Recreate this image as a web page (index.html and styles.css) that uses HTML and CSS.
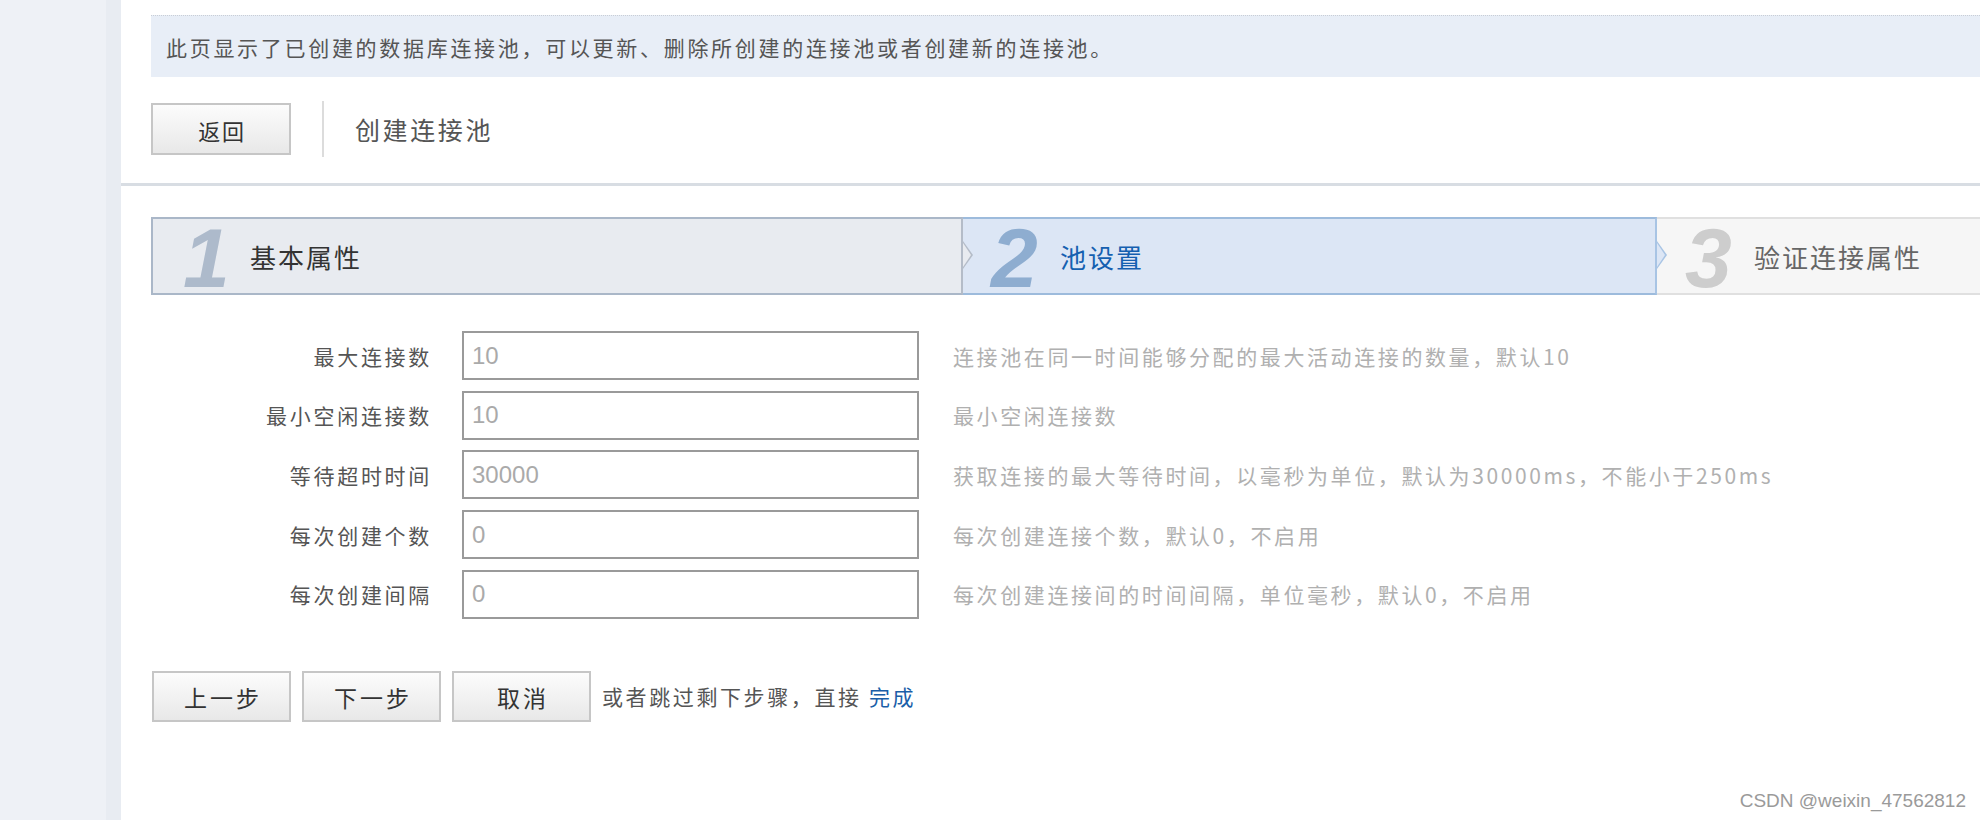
FILE: index.html
```html
<!DOCTYPE html>
<html lang="zh-CN">
<head>
<meta charset="utf-8">
<title>创建连接池</title>
<link rel="stylesheet" href="styles.css">
</head>
<body>
<div class="page">
  <aside class="sidebar"></aside>
  <main class="main">
    <div class="info">此页显示了已创建的数据库连接池，可以更新、删除所创建的连接池或者创建新的连接池。</div>
    <div class="toolbar">
      <button class="btn btn-back">返回</button>
      <span class="sep"></span>
      <span class="title">创建连接池</span>
    </div>
    <div class="rule"></div>
    <div class="steps">
      <div class="step step-done"><span class="num">1</span><span class="label">基本属性</span></div>
      <div class="step step-active"><span class="num">2</span><span class="label">池设置</span></div>
      <div class="step step-todo"><span class="num">3</span><span class="label">验证连接属性</span></div>
    </div>
    <div class="form">
      <div class="row"><label class="lbl">最大连接数</label><input class="inp" value="10"><span class="help">连接池在同一时间能够分配的最大活动连接的数量，默认10</span></div>
      <div class="row"><label class="lbl">最小空闲连接数</label><input class="inp" value="10"><span class="help">最小空闲连接数</span></div>
      <div class="row"><label class="lbl">等待超时时间</label><input class="inp" value="30000"><span class="help">获取连接的最大等待时间，以毫秒为单位，默认为30000ms，不能小于250ms</span></div>
      <div class="row"><label class="lbl">每次创建个数</label><input class="inp" value="0"><span class="help">每次创建连接个数，默认0，不启用</span></div>
      <div class="row"><label class="lbl">每次创建间隔</label><input class="inp" value="0"><span class="help">每次创建连接间的时间间隔，单位毫秒，默认0，不启用</span></div>
    </div>
    <div class="actions">
      <button class="btn btn-step">上一步</button>
      <button class="btn btn-step">下一步</button>
      <button class="btn btn-step">取消</button>
      <span class="skip">或者跳过剩下步骤，直接 <a class="link" href="#">完成</a></span>
    </div>
  </main>
  <div class="watermark">CSDN @weixin_47562812</div>
</div>
</body>
</html>
```

FILE: styles.css
```css
* { box-sizing: border-box; }
html, body { margin: 0; padding: 0; }
body {
  width: 1980px;
  height: 820px;
  overflow: hidden;
  background: #ffffff;
  font-family: "Noto Sans CJK SC", "Liberation Sans", sans-serif;
  color: #555;
}
.page {
  display: flex;
  width: 1980px;
  height: 820px;
  position: relative;
}
.sidebar {
  width: 121px;
  flex: none;
  background: linear-gradient(to right, #eef1f6 0, #eef1f6 106px, #e8ecf2 106px, #e8ecf2 121px);
}
.main {
  flex: 1;
  overflow: hidden;
  padding-top: 15px;
}
.info {
  margin-left: 30px;
  height: 62px;
  border-top: 1px dotted #c9ced6;
  background: #e8eef7;
  display: flex;
  align-items: center;
  padding-left: 15px;
  font-size: 21px;
  letter-spacing: 2.7px;
  color: #555;
  white-space: nowrap;
}
.toolbar {
  margin-left: 30px;
  margin-top: 24px;
  display: flex;
  align-items: center;
  height: 56px;
}
.btn {
  font-family: "Noto Sans CJK SC", "Liberation Sans", sans-serif;
  border: 2px solid #c6c6c6;
  background: linear-gradient(#fcfcfc, #e8e8e8);
  color: #333;
  padding: 0;
  margin: 0;
  cursor: pointer;
}
.btn-back {
  width: 140px;
  height: 52px;
  font-size: 22px;
  letter-spacing: 1.7px;
  padding-left: 2px;
  padding-top: 2px;
}
.sep {
  width: 2px;
  height: 56px;
  background: #dcdcdc;
  margin-left: 31px;
}
.title {
  margin-left: 31px;
  font-size: 25px;
  letter-spacing: 2.6px;
  color: #555;
}
.rule {
  margin-top: 26px;
  height: 3px;
  background: #d8dde3;
}
.steps {
  margin-left: 30px;
  margin-top: 31px;
  display: flex;
  height: 78px;
}
.step {
  position: relative;
  display: flex;
  align-items: center;
  flex: none;
  border-style: solid;
  border-width: 2px 0;
}
.step .num {
  font-family: "Liberation Sans", sans-serif;
  font-weight: bold;
  font-style: italic;
  font-size: 84px;
  line-height: 1;
  width: 97px;
  padding-left: 28px;
  padding-top: 4px;
}
.step .label {
  font-size: 26px;
  letter-spacing: 2px;
}
.step-done {
  width: 812px;
  background: #e8ebf0;
  border-color: #aab7c8;
  border-left-width: 2px;
  border-right: 2px solid #b4bcc8;
  z-index: 3;
}
.step-done .num { color: #adbacb; padding-left: 30px; width: 97px; }
.step-done .label { color: #333; }
.step-active {
  width: 694px;
  background: #dce6f5;
  border-color: #9dbbdc;
  border-right: 2px solid #a8c4e4;
  z-index: 2;
}
.step-active .num { color: #8eadd0; }
.step-active .label { color: #1560b0; }
.step-todo {
  width: 700px;
  background: #f6f6f6;
  border-color: #e0e0e0;
  z-index: 1;
}
.step-todo .num { color: #cdcdcd; }
.step-todo .label { color: #666; }

.step-done::before,
.step-active::before,
.step-done::after,
.step-active::after {
  content: "";
  position: absolute;
  top: 50%;
  clip-path: polygon(0 0, 100% 50%, 0 100%);
}
.step-done::before,
.step-active::before {
  right: -12px;
  width: 10px;
  height: 28px;
  margin-top: -15px;
}
.step-done::after,
.step-active::after {
  right: -10px;
  width: 8px;
  height: 24px;
  margin-top: -13px;
}
.step-done::before { background: #b4bcc8; }
.step-done::after { background: #e8ebf0; }
.step-active::before { background: #a8c4e4; }
.step-active::after { background: #dce6f5; }

.form {
  margin-left: 31px;
  margin-top: 36px;
  display: flex;
  flex-direction: column;
  gap: 10.7px;
}
.row {
  display: flex;
  align-items: center;
  height: 49px;
}
.lbl {
  width: 280px;
  text-align: right;
  font-size: 21px;
  letter-spacing: 2.7px;
  color: #555;
  margin-right: 30px;
}
.inp {
  width: 457px;
  height: 49px;
  border: 2px solid #9a9a9a;
  padding: 0 0 0 8px;
  margin: 0;
  font-family: "Liberation Sans", sans-serif;
  font-size: 24px;
  color: #aaaaaa;
  background: #fff;
  outline: none;
}
.help {
  margin-left: 34px;
  font-size: 21px;
  letter-spacing: 2.6px;
  color: #b0b0b0;
  white-space: nowrap;
}
.actions {
  margin-left: 31px;
  margin-top: 52px;
  display: flex;
  align-items: center;
  gap: 11px;
}
.btn-step {
  width: 139px;
  height: 51px;
  font-size: 23px;
  letter-spacing: 3px;
  padding-left: 3px;
  padding-top: 2px;
}
.skip {
  font-size: 21px;
  letter-spacing: 2.6px;
  color: #555;
  white-space: nowrap;
}
.link {
  color: #1a5ea8;
  text-decoration: none;
}
.watermark {
  position: absolute;
  right: 14px;
  bottom: 8px;
  font-family: "Liberation Sans", sans-serif;
  font-size: 19px;
  color: #9a9a9a;
  text-shadow: 0 0 2px #fff;
}
```
